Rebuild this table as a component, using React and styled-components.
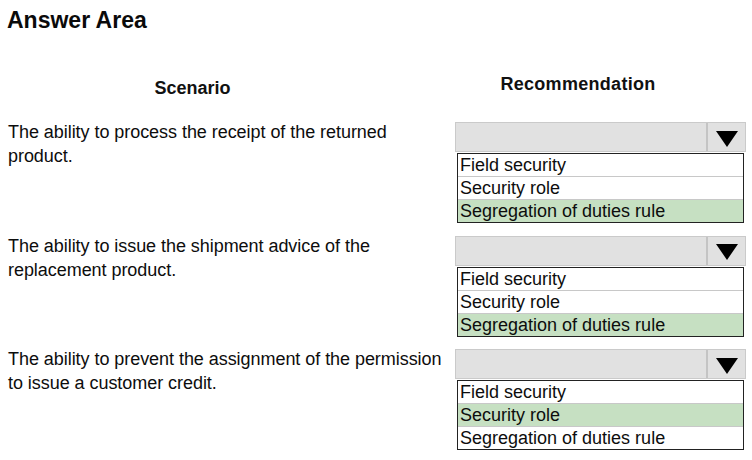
import React from 'react';
import styled, { createGlobalStyle } from 'styled-components';

const GlobalStyle = createGlobalStyle`
    body{
        margin: 0;
        background: #ffffff;
        font-family: "Liberation Sans", Arial, sans-serif;
        color: #111111;
    }
`;

const questions = [
    {
        text: 'The ability to process the receipt of the returned product.',
        selected: 2,
    },
    {
        text: 'The ability to issue the shipment advice of the replacement product.',
        selected: 2,
    },
    {
        text: 'The ability to prevent the assignment of the permission to issue a customer credit.',
        selected: 1,
    },
];

const options = ['Field security', 'Security role', 'Segregation of duties rule'];

const Dropdown = ({selected}) => (
    <StyledDropdown>
        <SelectBox>
            <SelectValue />
            <ArrowCell>
                <svg width="22" height="16" viewBox="0 0 22 16">
                    <polygon points="0,0 22,0 11,16" fill="#000" />
                </svg>
            </ArrowCell>
        </SelectBox>
        <OptionList>
            {options.map((opt, i) => (
                <Option key={opt} $active={i === selected}>{opt}</Option>
            ))}
        </OptionList>
    </StyledDropdown>
);

const App = () => {
    return (
        <Page>
            <GlobalStyle />
            <Title>Answer Area</Title>
            <HeadRow>
                <ColumnHead $width="371px" $top="4px">Scenario</ColumnHead>
                <ColumnHead $width="246px" $top="0px">Recommendation</ColumnHead>
            </HeadRow>
            <Rows>
                {questions.map((q) => (
                    <Row key={q.text}>
                        <Scenario>{q.text}</Scenario>
                        <Dropdown selected={q.selected} />
                    </Row>
                ))}
            </Rows>
        </Page>
    );
};

const Page = styled.div`
    padding: 7px 0 0 7px;
    width: 752px;
    box-sizing: border-box;
`;

const Title = styled.h1`
    margin: 0;
    font-size: 23px;
    line-height: 26px;
    font-weight: bold;
    color: #0a0a0a;
`;

const HeadRow = styled.div`
    display: flex;
    justify-content: space-between;
    width: 694px;
    margin-top: 40px;
`;

const ColumnHead = styled.div`
    width: ${(p) => p.$width};
    padding-top: ${(p) => p.$top};
    text-align: center;
    font-size: 18px;
    line-height: 22px;
    font-weight: bold;
    letter-spacing: ${(p) => (p.$top === '0px' ? '0.3px' : '0')};
`;

const Rows = styled.div`
    display: flex;
    flex-direction: column;
    gap: 12.5px;
    margin-top: 23px;
`;

const Row = styled.div`
    display: grid;
    grid-template-columns: 448px 291px;
    align-items: start;
`;

const Scenario = styled.p`
    margin: -2px 0 0 1px;
    width: 440px;
    font-size: 18px;
    line-height: 24px;
    letter-spacing: -0.05px;
    color: #0d0d0d;
`;

const StyledDropdown = styled.div`
    display: flex;
    flex-direction: column;
    gap: 1px;
`;

const SelectBox = styled.div`
    display: flex;
    height: 30px;
    box-sizing: border-box;
    background: #e1e1e1;
    border: 1px solid #cacaca;
`;

const SelectValue = styled.div`
    flex: 1;
`;

const ArrowCell = styled.div`
    width: 39px;
    display: flex;
    align-items: center;
    justify-content: center;
    padding-top: 3px;
    box-sizing: border-box;
    border-left: 2px solid #c4c4c4;
`;

const OptionList = styled.div`
    margin: 0 2px;
    border: 1px solid #222;
    display: flex;
    flex-direction: column;
`;

const Option = styled.div`
    height: 23px;
    line-height: 22px;
    padding-left: 2px;
    font-size: 18px;
    box-sizing: border-box;
    color: #0d0d0d;
    background: ${(p) => (p.$active ? '#c6e0c2' : '#ffffff')};
    border-top: 1px solid #c8c8c8;
    &:first-child{
        border-top: none;
        height: 22px;
    }
`;

export default App;
